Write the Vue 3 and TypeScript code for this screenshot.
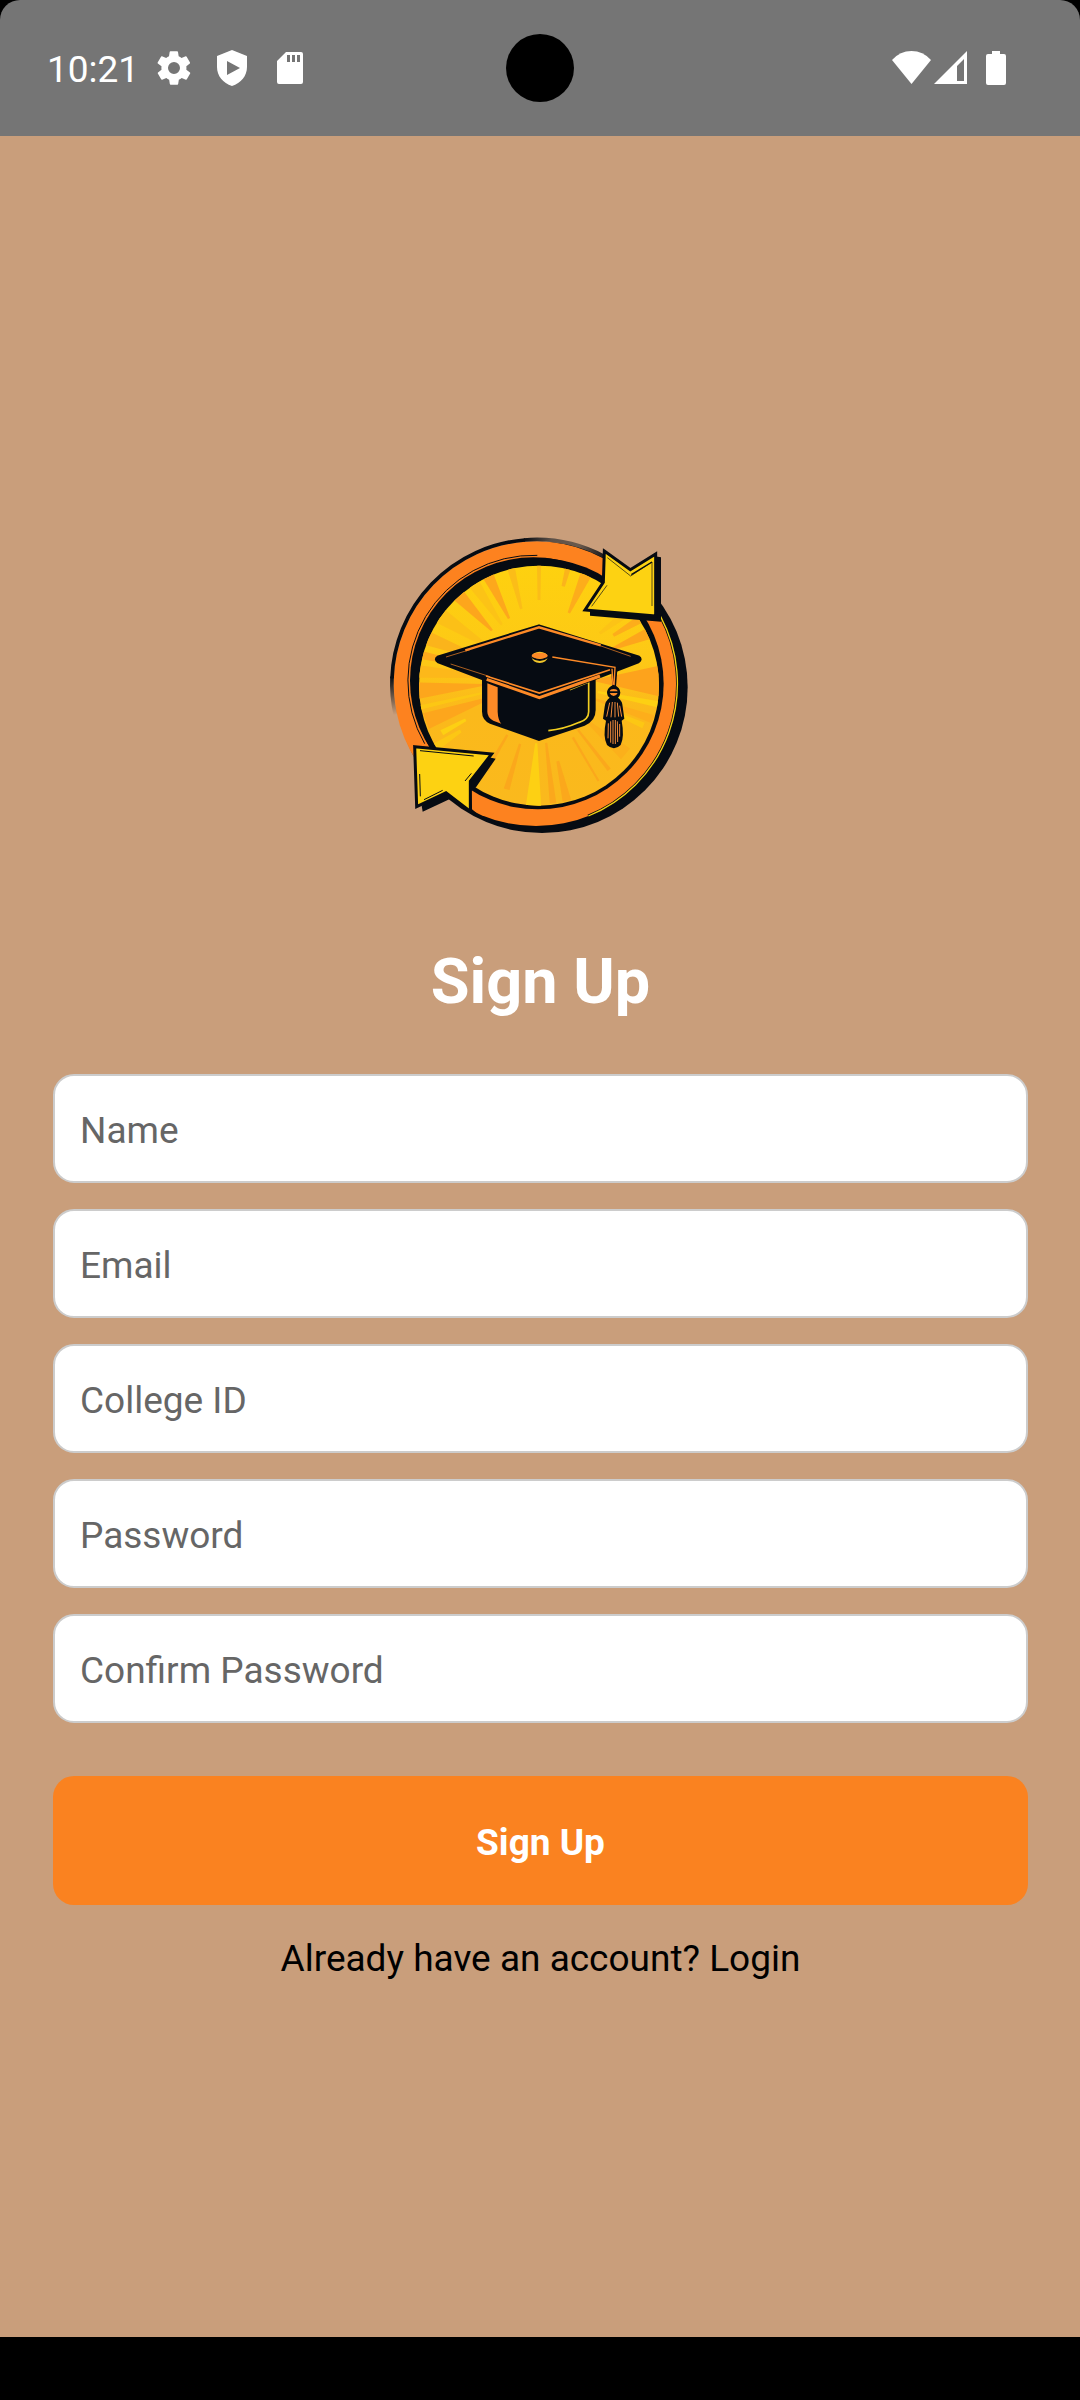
<script setup lang="ts">
import { reactive } from 'vue'

interface Field {
  id: 'name' | 'email' | 'collegeId' | 'password' | 'confirm'
  label: string
  type: string
}

const fields: Field[] = [
  { id: 'name', label: 'Name', type: 'text' },
  { id: 'email', label: 'Email', type: 'email' },
  { id: 'collegeId', label: 'College ID', type: 'text' },
  { id: 'password', label: 'Password', type: 'password' },
  { id: 'confirm', label: 'Confirm Password', type: 'password' },
]

const form = reactive<Record<Field['id'], string>>({
  name: '',
  email: '',
  collegeId: '',
  password: '',
  confirm: '',
})

interface Ray {
  from: number
  to: number
  inner: number
  outer: number
  fill: string
}

// Sunburst wedges; angles in degrees, clockwise from the right
const rays: Ray[] = [
  { from: 181, to: 187, inner: 120, outer: 370, fill: '#fdb81a' },
  { from: 190, to: 194, inner: 150, outer: 370, fill: '#fda81c' },
  { from: 197, to: 204, inner: 150, outer: 370, fill: '#fbb41b' },
  { from: 209, to: 217, inner: 170, outer: 370, fill: '#fcc017' },
  { from: 223, to: 230, inner: 205, outer: 370, fill: '#fda61c' },
  { from: 233, to: 239, inner: 200, outer: 345, fill: '#fcc316' },
  { from: 241, to: 247, inner: 205, outer: 362, fill: '#fda81c' },
  { from: 254, to: 258, inner: 220, outer: 355, fill: '#fbbd18' },
  { from: 269, to: 271, inner: 240, outer: 360, fill: '#fbbd18' },
  { from: 283, to: 286, inner: 290, outer: 355, fill: '#fbb41b' },
  { from: 291, to: 297, inner: 220, outer: 360, fill: '#fdad1b' },
  { from: 320, to: 325, inner: 230, outer: 350, fill: '#fcc316' },
  { from: 327, to: 331, inner: 260, outer: 350, fill: '#fdad1b' },
  { from: 334, to: 340, inner: 240, outer: 370, fill: '#fda61c' },
  { from: 353, to: 368, inner: 170, outer: 370, fill: '#fda31c' },
  { from: 10, to: 13, inner: 180, outer: 370, fill: '#fdd013' },
  { from: 17, to: 21, inner: 170, outer: 350, fill: '#fdae1b' },
  { from: 22, to: 25, inner: 240, outer: 330, fill: '#fcc714' },
  { from: 37, to: 44, inner: 180, outer: 330, fill: '#fbb01b' },
  { from: 51, to: 53, inner: 190, outer: 330, fill: '#fba81c' },
  { from: 59, to: 60, inner: 200, outer: 340, fill: '#fba81c' },
  { from: 75, to: 79, inner: 250, outer: 360, fill: '#fba81c' },
  { from: 82, to: 85, inner: 190, outer: 360, fill: '#fba81c' },
  { from: 89, to: 96, inner: 190, outer: 370, fill: '#fdd013' },
  { from: 105, to: 108, inner: 200, outer: 330, fill: '#fba81c' },
  { from: 119, to: 121, inner: 190, outer: 300, fill: '#fba81c' },
  { from: 145, to: 149, inner: 280, outer: 370, fill: '#fcc714' },
  { from: 150, to: 153, inner: 250, outer: 320, fill: '#fdd013' },
  { from: 156, to: 164, inner: 150, outer: 350, fill: '#fda61c' },
  { from: 166, to: 168, inner: 170, outer: 370, fill: '#fcc714' },
  { from: 171, to: 179, inner: 170, outer: 370, fill: '#fda61c' },
]

function point(angle: number, radius: number): string {
  const a = (angle * Math.PI) / 180
  return `${(507 + radius * Math.cos(a)).toFixed(1)},${(480 + radius * Math.sin(a)).toFixed(1)}`
}

function wedge(r: Ray): string {
  const mid = (r.from + r.to) / 2
  const reach = r.outer + 12
  return [point(mid - 1, r.inner), point(r.from, reach), point(r.to, reach), point(mid + 1, r.inner)].join(' ')
}
</script>

<template>
  <div class="screen">
    <header class="status">
      <div class="status-left">
        <span class="clock">10:21</span>
        <svg class="gear" viewBox="0 0 24 24" aria-hidden="true">
          <path d="M19.4 13a7.500 7.500 0 0 0 0-2l2.100-1.700a.5.5 0 0 0 .1-.6l-2-3.500a.5.5 0 0 0-.6-.2l-2.500 1a7.300 7.300 0 0 0-1.700-1l-.4-2.600a.5.5 0 0 0-.5-.4h-4a.5.5 0 0 0-.5.4L9 5a7.300 7.300 0 0 0-1.700 1l-2.500-1a.5.5 0 0 0-.6.2l-2 3.500a.5.5 0 0 0 .1.600L4.500 11a7.500 7.500 0 0 0 0 2l-2.100 1.700a.5.5 0 0 0-.1.600l2 3.500c.1.200.4.300.6.200l2.500-1a7.300 7.300 0 0 0 1.700 1l.4 2.600c0 .2.200.4.500.4h4c.3 0 .5-.2.500-.4l.4-2.600a7.300 7.300 0 0 0 1.700-1l2.500 1c.2.100.5 0 .6-.2l2-3.500a.5.5 0 0 0-.1-.6zM12 15.600a3.600 3.600 0 1 1 0-7.200 3.600 3.600 0 0 1 0 7.200z" />
        </svg>
        <svg class="shield" viewBox="0 0 30 36" aria-hidden="true">
          <path fill-rule="evenodd" d="M15 0 30 6V17C30 26 24 33 15 36 6 33 0 26 0 17V6ZM10 11V25L23 18Z" />
        </svg>
        <svg class="sd" viewBox="0 0 26 32" aria-hidden="true">
          <path fill-rule="evenodd" d="M9 0H24Q26 0 26 2V30Q26 32 24 32H2Q0 32 0 30V9ZM10 3V10H13V3ZM15 3V10H18V3ZM20 3V10H23V3Z" />
        </svg>
      </div>
      <div class="camera"></div>
      <div class="status-right">
        <svg class="wifi" viewBox="0 0 39 34" aria-hidden="true">
          <path d="M0 9Q8 0 19.500 0T39 9L19.500 33Z" />
        </svg>
        <svg class="signal" viewBox="0 0 33 34" aria-hidden="true">
          <path fill-rule="evenodd" d="M33 0V33H0ZM30 8 23 15V30H30Z" />
        </svg>
        <svg class="battery" viewBox="0 0 20 34" aria-hidden="true">
          <path d="M6 0H14V3H18Q20 3 20 5V32Q20 34 18 34H2Q0 34 0 32V5Q0 3 2 3H6Z" />
        </svg>
      </div>
    </header>

    <main class="content">
      <svg class="logo" viewBox="0 0 1182 1182" role="img" aria-label="Graduation cap logo">
        <defs>
          <linearGradient id="disc" x1="0" y1="0" x2="0" y2="1">
            <stop offset="0" stop-color="#fed10f" />
            <stop offset="0.4" stop-color="#fdc816" />
            <stop offset="0.6" stop-color="#fbb91b" />
            <stop offset="1" stop-color="#fab91d" />
          </linearGradient>
          <linearGradient id="fadeTop" gradientUnits="userSpaceOnUse" x1="460" y1="0" x2="700" y2="0">
            <stop offset="0" stop-color="#060b12" />
            <stop offset="0.35" stop-color="#5d5148" />
            <stop offset="0.7" stop-color="#6b5a4c" />
            <stop offset="1" stop-color="#1d1c1e" />
          </linearGradient>
          <linearGradient id="fadeLeft" gradientUnits="userSpaceOnUse" x1="0" y1="470" x2="0" y2="585">
            <stop offset="0" stop-color="#060b12" />
            <stop offset="1" stop-color="#060b12" stop-opacity="0" />
          </linearGradient>
          <clipPath id="discClip"><circle cx="507" cy="497" r="360" /></clipPath>
        </defs>
        <g transform="translate(78 81)" stroke-linejoin="miter">
          <!-- ring -->
          <circle cx="516" cy="502" r="437" fill="#060b12" />
          <circle cx="498" cy="491" r="427" fill="#fd821f" />
          <path d="M66 475A432 432 0 0 1 465 60" fill="none" stroke="#060b12" stroke-width="11" />
          <path d="M462 60A432 432 0 0 1 702 109" fill="none" stroke="url(#fadeTop)" stroke-width="11" />
          <path d="M66 470A432 432 0 0 0 76 585" fill="none" stroke="url(#fadeLeft)" stroke-width="11" />
          <path d="M502 106A377 377 0 0 0 164 671" fill="none" stroke="#060b12" stroke-width="3" />
          <circle cx="504" cy="491" r="377" fill="#060b12" />
          <circle cx="490" cy="482" r="370" fill="#060b12" />
          <path d="M872 286A429 429 0 0 1 655 890" fill="none" stroke="#060b12" stroke-width="13" />
          <path d="M872 290A428 428 0 0 1 655 888" fill="none" stroke="#f3d313" stroke-width="4" />
          <!-- sunburst -->
          <circle cx="507" cy="497" r="360" fill="url(#disc)" />
          <g clip-path="url(#discClip)">
            <polygon v-for="(ray, i) in rays" :key="i" :points="wedge(ray)" :fill="ray.fill" />
          </g>
          <!-- arrows -->
          <path d="M850 108 873 112V305L660 287V270Z" fill="#060b12" />
          <path d="M703 93 781 149 857 102V288L645 270 700 187Z" fill="#fdd212" stroke="#060b12" stroke-width="9" />
          <path d="M712 113 782 168 846 126V258M711 196 665 259" fill="none" stroke="#060b12" stroke-width="2" />
          <path d="M784 164 846 126" stroke="#060b12" stroke-width="4" />
          <path d="M155 857 158 875 238 838 300 876 323 891 326 884 306 868 304 812 318 802 377 716 350 710 225 800Z" fill="#060b12" />
          <path d="M134 680 365 702 301 784V874L228 818 140 860Z" fill="#fdd212" stroke="#060b12" stroke-width="9" />
          <path d="M150 692 311 708M149 762 151 829M162 839 218 811M285 783 304 760" fill="none" stroke="#060b12" stroke-width="3" />
          <!-- cap body -->
          <path d="M336 455V575Q336 600 360 611L507 663 644 617Q677 603 677 570V455Z" fill="#060b12" />
          <path d="M352 490 383 502V575Q384 600 394 611L370 602Q352 592 352 575Z" fill="#fd8a27" />
          <path d="M599 509 656 486V575Q656 598 628 607 580 628 535 632" fill="none" stroke="#f3cf20" stroke-width="5" />
          <!-- cap board -->
          <path d="M507 317 805 410Q817 418 805 426L507 541 205 426Q192 418 205 410Z" fill="#060b12" stroke="#060b12" stroke-width="8" stroke-linejoin="round" />
          <path d="M286 391 507 322 692 376" fill="none" stroke="#fd8a27" stroke-width="7" />
          <path d="M228 411 300 389M690 377 782 409M242 432 360 470" fill="none" stroke="#fd8a27" stroke-width="2" />
          <path d="M348 468 508 519 720 449" fill="none" stroke="#fd8a27" stroke-width="5" />
          <path d="M350 478 508 533 690 468" fill="none" stroke="#fd8a27" stroke-width="9" />
          <ellipse cx="509" cy="412" rx="24" ry="17" fill="#f3c72a" />
          <path d="M484 406Q509 428 535 406V414Q509 432 484 414Z" fill="#060b12" />
          <ellipse cx="509" cy="407" rx="24" ry="9" fill="#fd8a27" />
          <!-- tassel -->
          <path d="M724 450H742L738 500H727Z" fill="#060b12" />
          <path d="M547 411 735 442 732 498M726 446 729 496" fill="none" stroke="#fd8a27" stroke-width="4" />
          <path d="M731 494Q751 502 751 518 750 528 744 533 757 542 758 560L763 596 755 602Q764 650 752 675 732 695 711 675 698 650 708 602L699 596 704 560Q706 542 719 533 711 528 711 516 712 502 731 494Z" fill="#060b12" />
          <path d="M719 514H743Q741 507 731 507T719 514ZM719 519H743Q739 528 731 528T719 519Z" fill="#fd8a27" />
          <path d="M719 548 710 590M727 546 723 592M735 546V592M742 548 746 590M749 557 755 590M715 610 714 655M722 604V668M729 600V672M736 600V672M742 604 743 666M749 612V650" fill="none" stroke="#f28b3c" stroke-width="3" />
        </g>
      </svg>

      <h1 class="title">Sign Up</h1>

      <form class="form" @submit.prevent>
        <div class="fields">
          <input
            v-for="field in fields"
            :id="field.id"
            :key="field.id"
            v-model="form[field.id]"
            class="field"
            :type="field.type"
            :placeholder="field.label"
            :aria-label="field.label"
          />
        </div>
        <button class="submit" type="submit">Sign Up</button>
      </form>

      <a class="login" href="#login">Already have an account? Login</a>
    </main>

    <div class="nav-bar"></div>
  </div>
</template>

<style>
body {
  margin: 0;
  background: #000;
}
</style>

<style scoped>
.screen {
  display: flex;
  flex-direction: column;
  min-height: 100vh;
  background: #000;
  font-family: Roboto, "Liberation Sans", sans-serif;
}

.status {
  display: grid;
  grid-template-columns: 1fr auto 1fr;
  align-items: center;
  height: 136px;
  border-radius: 20px 20px 0 0;
  background: #757575;
  color: #fff;
}

.status svg {
  display: block;
  fill: currentColor;
}

.status-left {
  display: flex;
  align-items: center;
  padding-left: 47px;
}

.clock {
  padding-top: 4px;
  font-size: 37px;
  line-height: 48px;
  margin-right: 15px;
}

.gear {
  width: 40px;
  height: 40px;
  margin-right: 23px;
}

.shield {
  width: 30px;
  height: 36px;
  margin-right: 30px;
}

.sd {
  width: 26px;
  height: 32px;
}

.camera {
  width: 68px;
  height: 68px;
  border-radius: 50%;
  background: #000;
}

.status-right {
  display: flex;
  align-items: center;
  justify-content: flex-end;
  padding-right: 74px;
}

.wifi {
  width: 39px;
  height: 34px;
  margin-right: 3px;
}

.signal {
  width: 33px;
  height: 34px;
  margin-right: 19px;
}

.battery {
  width: 20px;
  height: 34px;
}

.content {
  display: flex;
  flex: 1;
  flex-direction: column;
  align-items: center;
  justify-content: center;
  padding: 3px 52px 0 53px;
  background: #c99e7b;
}

.logo {
  display: block;
  width: 394px;
  height: 394px;
}

.title {
  margin: 53px 0 50px;
  color: #fff;
  font-size: 63px;
  font-weight: 700;
  line-height: 84px;
}

.form {
  display: flex;
  flex-direction: column;
  gap: 53px;
  width: 100%;
}

.fields {
  display: flex;
  flex-direction: column;
  gap: 26px;
}

.field {
  box-sizing: border-box;
  width: 100%;
  height: 109px;
  padding: 3px 25px 0;
  border: 2px solid #ccc;
  border-radius: 21px;
  background: #fff;
  color: #000;
  font-family: inherit;
  font-size: 37px;
}

.field::placeholder {
  color: #666;
  opacity: 1;
}

.submit {
  width: 100%;
  height: 129px;
  padding: 3px 0 0;
  border: 0;
  border-radius: 21px;
  background: #fa8220;
  color: #fff;
  font-family: inherit;
  font-size: 37px;
  font-weight: 700;
}

.login {
  margin-top: 30px;
  color: #000;
  font-size: 37px;
  line-height: 48px;
  text-decoration: none;
}

.nav-bar {
  height: 63px;
  background: #000;
}
</style>
